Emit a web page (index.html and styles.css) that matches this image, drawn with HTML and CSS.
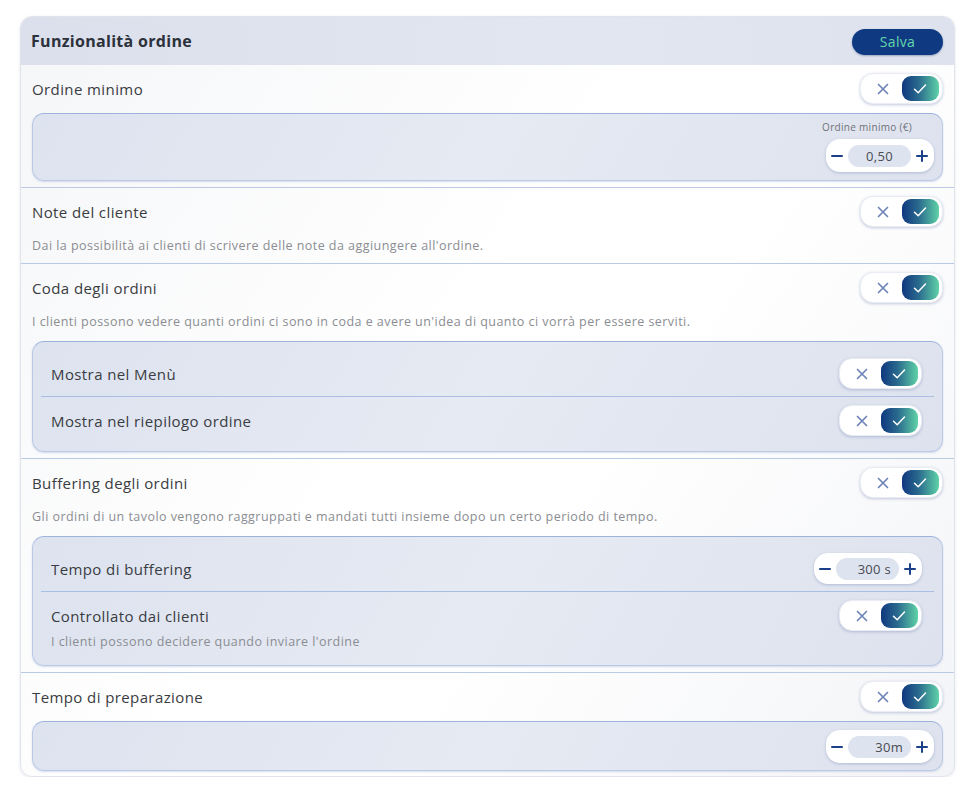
FILE: index.html
```html
<!DOCTYPE html>
<html lang="it">
<head>
<meta charset="utf-8">
<title>Funzionalità ordine</title>
<link rel="stylesheet" href="styles.css">
</head>
<body>
<div class="card">
  <div class="card-head">
    <h1 class="card-title">Funzionalità ordine</h1>
    <button class="btn-save">Salva</button>
  </div>

  <section class="section">
    <div class="row-head">
      <span class="row-title">Ordine minimo</span>
      <div class="toggle">
        <span class="toggle-off"><svg viewBox="0 0 12 12" width="12" height="12"><path d="M1.5 1.5 L10.5 10.5 M10.5 1.5 L1.5 10.5" /></svg></span>
        <span class="toggle-on"><svg viewBox="0 0 14 12" width="14" height="12"><path d="M1.5 6.2 L5.2 9.8 L12.5 2" /></svg></span>
      </div>
    </div>
    <div class="subbox subbox-field">
      <span class="field-label">Ordine minimo (€)</span>
      <div class="stepper">
        <span class="step-minus"></span>
        <span class="step-value">0,50</span>
        <span class="step-plus"></span>
      </div>
    </div>
  </section>

  <section class="section">
    <div class="row-head">
      <span class="row-title">Note del cliente</span>
      <div class="toggle">
        <span class="toggle-off"><svg viewBox="0 0 12 12" width="12" height="12"><path d="M1.5 1.5 L10.5 10.5 M10.5 1.5 L1.5 10.5" /></svg></span>
        <span class="toggle-on"><svg viewBox="0 0 14 12" width="14" height="12"><path d="M1.5 6.2 L5.2 9.8 L12.5 2" /></svg></span>
      </div>
    </div>
    <p class="row-desc">Dai la possibilità ai clienti di scrivere delle note da aggiungere all'ordine.</p>
  </section>

  <section class="section">
    <div class="row-head">
      <span class="row-title">Coda degli ordini</span>
      <div class="toggle">
        <span class="toggle-off"><svg viewBox="0 0 12 12" width="12" height="12"><path d="M1.5 1.5 L10.5 10.5 M10.5 1.5 L1.5 10.5" /></svg></span>
        <span class="toggle-on"><svg viewBox="0 0 14 12" width="14" height="12"><path d="M1.5 6.2 L5.2 9.8 L12.5 2" /></svg></span>
      </div>
    </div>
    <p class="row-desc">I clienti possono vedere quanti ordini ci sono in coda e avere un'idea di quanto ci vorrà per essere serviti.</p>
    <div class="subbox">
      <div class="subrow">
        <div class="subrow-head">
          <span class="row-title">Mostra nel Menù</span>
          <div class="toggle">
            <span class="toggle-off"><svg viewBox="0 0 12 12" width="12" height="12"><path d="M1.5 1.5 L10.5 10.5 M10.5 1.5 L1.5 10.5" /></svg></span>
            <span class="toggle-on"><svg viewBox="0 0 14 12" width="14" height="12"><path d="M1.5 6.2 L5.2 9.8 L12.5 2" /></svg></span>
          </div>
        </div>
      </div>
      <div class="subrow">
        <div class="subrow-head">
          <span class="row-title">Mostra nel riepilogo ordine</span>
          <div class="toggle">
            <span class="toggle-off"><svg viewBox="0 0 12 12" width="12" height="12"><path d="M1.5 1.5 L10.5 10.5 M10.5 1.5 L1.5 10.5" /></svg></span>
            <span class="toggle-on"><svg viewBox="0 0 14 12" width="14" height="12"><path d="M1.5 6.2 L5.2 9.8 L12.5 2" /></svg></span>
          </div>
        </div>
      </div>
    </div>
  </section>

  <section class="section">
    <div class="row-head">
      <span class="row-title">Buffering degli ordini</span>
      <div class="toggle">
        <span class="toggle-off"><svg viewBox="0 0 12 12" width="12" height="12"><path d="M1.5 1.5 L10.5 10.5 M10.5 1.5 L1.5 10.5" /></svg></span>
        <span class="toggle-on"><svg viewBox="0 0 14 12" width="14" height="12"><path d="M1.5 6.2 L5.2 9.8 L12.5 2" /></svg></span>
      </div>
    </div>
    <p class="row-desc">Gli ordini di un tavolo vengono raggruppati e mandati tutti insieme dopo un certo periodo di tempo.</p>
    <div class="subbox">
      <div class="subrow">
        <div class="subrow-head">
          <span class="row-title">Tempo di buffering</span>
          <div class="stepper stepper-inner">
            <span class="step-minus"></span>
            <span class="step-value step-value-right">300 s</span>
            <span class="step-plus"></span>
          </div>
        </div>
      </div>
      <div class="subrow">
        <div class="subrow-head">
          <span class="row-title">Controllato dai clienti</span>
          <div class="toggle">
            <span class="toggle-off"><svg viewBox="0 0 12 12" width="12" height="12"><path d="M1.5 1.5 L10.5 10.5 M10.5 1.5 L1.5 10.5" /></svg></span>
            <span class="toggle-on"><svg viewBox="0 0 14 12" width="14" height="12"><path d="M1.5 6.2 L5.2 9.8 L12.5 2" /></svg></span>
          </div>
        </div>
        <p class="subrow-desc">I clienti possono decidere quando inviare l'ordine</p>
      </div>
    </div>
  </section>

  <section class="section section-last">
    <div class="row-head">
      <span class="row-title">Tempo di preparazione</span>
      <div class="toggle">
        <span class="toggle-off"><svg viewBox="0 0 12 12" width="12" height="12"><path d="M1.5 1.5 L10.5 10.5 M10.5 1.5 L1.5 10.5" /></svg></span>
        <span class="toggle-on"><svg viewBox="0 0 14 12" width="14" height="12"><path d="M1.5 6.2 L5.2 9.8 L12.5 2" /></svg></span>
      </div>
    </div>
    <div class="subbox subbox-field subbox-short">
      <div class="stepper">
        <span class="step-minus"></span>
        <span class="step-value step-value-right">30m</span>
        <span class="step-plus"></span>
      </div>
    </div>
  </section>
</div>
</body>
</html>
```

FILE: styles.css
```css
* { box-sizing: border-box; }

body {
  margin: 0;
  background: #ffffff;
  font-family: "Open Sans", "DejaVu Sans", sans-serif;
  color: #3b3d42;
}

.card {
  width: 935px;
  margin: 16px 0 0 20px;
  border: 1px solid #e0e3ea;
  border-radius: 12px;
  overflow: hidden;
  background: linear-gradient(125deg, #f5f6f8 0%, #ffffff 45%, #ffffff 60%, #f3f4f7 100%);
  box-shadow: 0 1px 3px rgba(150, 160, 180, 0.25);
}

.card-head {
  height: 48px;
  padding: 0 11px 0 10px;
  display: flex;
  align-items: center;
  justify-content: space-between;
  background: linear-gradient(90deg, #dbe0ec, #e2e6f0 60%, #dde2ee);
}

.card-title {
  margin: 0;
  font-size: 16px;
  font-weight: 700;
  letter-spacing: 0.3px;
  color: #2c313b;
}

.btn-save {
  width: 91px;
  height: 26px;
  margin-top: 1px;
  border: none;
  border-radius: 13px;
  background: #0f3a82;
  color: #63d6aa;
  font-family: inherit;
  font-size: 14px;
  font-weight: 500;
  letter-spacing: 0.3px;
  box-shadow: 0 1px 2px rgba(20, 50, 110, 0.35);
}

.section {
  padding: 8px 11px 6px 11px;
  border-bottom: 1px solid #bac9e4;
}

.section-last {
  border-bottom: none;
  padding-bottom: 5px;
}

.row-head,
.subrow-head {
  display: flex;
  align-items: center;
  justify-content: space-between;
}

.row-title {
  font-size: 15px;
  letter-spacing: 0.4px;
  color: #3a3c42;
}

.row-desc {
  margin: 10px 0 3px 0;
  font-size: 12.5px;
  line-height: 17px;
  letter-spacing: 0.45px;
  color: #8b8d92;
}

.toggle {
  width: 83px;
  height: 31px;
  padding: 3px;
  display: flex;
  align-items: center;
  justify-content: space-between;
  background: #ffffff;
  border: 1px solid #e9ecf3;
  border-radius: 13px;
  box-shadow: 0 1px 3px rgba(90, 110, 160, 0.35);
}

.toggle-off {
  width: 40px;
  display: flex;
  justify-content: center;
}

.toggle-off svg path {
  fill: none;
  stroke: #6e84b8;
  stroke-width: 1.7;
  stroke-linecap: round;
}

.toggle-on {
  width: 39px;
  height: 25px;
  border-radius: 9px;
  display: flex;
  align-items: center;
  justify-content: center;
  background: linear-gradient(90deg, #10387f 0%, #2a6a8e 45%, #5fd2a7 100%);
}

.toggle-on svg path {
  fill: none;
  stroke: #ffffff;
  stroke-width: 1.5;
  stroke-linecap: round;
  stroke-linejoin: round;
}

.subbox {
  margin-top: 9px;
  padding: 8px;
  border: 1px solid #b9c9e6;
  border-top-color: #9db3dc;
  border-radius: 12px;
  background: linear-gradient(120deg, #dde3ef 0%, #e6eaf3 50%, #dde2ee 100%);
  box-shadow: 0 1px 2px rgba(140, 160, 200, 0.35);
}

.section .row-desc + .subbox {
  margin-top: 11px;
}

.subbox-field {
  display: flex;
  flex-direction: column;
  align-items: flex-end;
  gap: 5px;
  padding-top: 6px;
}

.subbox-short {
  padding-top: 8px;
  padding-bottom: 7px;
}

.field-label {
  font-size: 10px;
  line-height: 14px;
  letter-spacing: 0.3px;
  color: #6f7278;
  margin-right: 22px;
}

.subrow {
  padding: 8px 12px 7px 10px;
}

.subrow + .subrow {
  border-top: 1px solid #a9bee3;
}

.subrow-desc {
  margin: 2px 0 0 0;
  font-size: 12.5px;
  line-height: 17px;
  letter-spacing: 0.45px;
  color: #8b8d92;
}

.stepper {
  width: 108px;
  height: 33px;
  padding: 0 5px 0 4px;
  display: flex;
  align-items: center;
  justify-content: space-between;
  background: #ffffff;
  border-radius: 14px;
  box-shadow: 0 1px 3px rgba(90, 110, 160, 0.35);
}

.stepper-inner {
  height: 31px;
}

.step-minus,
.step-plus {
  position: relative;
  width: 14px;
  height: 14px;
}

.step-minus::before,
.step-plus::before,
.step-plus::after {
  content: "";
  position: absolute;
  background: #1b3f88;
  border-radius: 1px;
}

.step-minus::before,
.step-plus::before {
  left: 1px;
  right: 1px;
  top: 6px;
  height: 2.5px;
}

.step-plus::after {
  top: 1px;
  bottom: 1px;
  left: 5.75px;
  width: 2.5px;
}

.step-value {
  width: 63px;
  height: 22px;
  border-radius: 11px;
  background: #dde3ef;
  display: flex;
  align-items: center;
  justify-content: center;
  font-size: 13px;
  letter-spacing: 0.3px;
  color: #4a4c52;
}

.step-value-right {
  justify-content: flex-end;
  padding-right: 8px;
}
```
